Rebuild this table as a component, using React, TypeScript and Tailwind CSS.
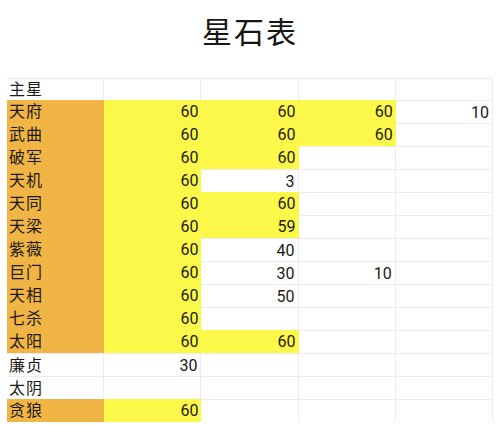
import React from "react";

type Cell = { v?: string; y?: boolean };
type Row = { name: string; o: boolean; cells: Cell[] };

const rows: Row[] = [
  { name: "天府", o: true, cells: [{ v: "60", y: true }, { v: "60", y: true }, { v: "60", y: true }, { v: "10" }] },
  { name: "武曲", o: true, cells: [{ v: "60", y: true }, { v: "60", y: true }, { v: "60", y: true }, {}] },
  { name: "破军", o: true, cells: [{ v: "60", y: true }, { v: "60", y: true }, {}, {}] },
  { name: "天机", o: true, cells: [{ v: "60", y: true }, { v: "3" }, {}, {}] },
  { name: "天同", o: true, cells: [{ v: "60", y: true }, { v: "60", y: true }, {}, {}] },
  { name: "天梁", o: true, cells: [{ v: "60", y: true }, { v: "59", y: true }, {}, {}] },
  { name: "紫薇", o: true, cells: [{ v: "60", y: true }, { v: "40" }, {}, {}] },
  { name: "巨门", o: true, cells: [{ v: "60", y: true }, { v: "30" }, { v: "10" }, {}] },
  { name: "天相", o: true, cells: [{ v: "60", y: true }, { v: "50" }, {}, {}] },
  { name: "七杀", o: true, cells: [{ v: "60", y: true }, {}, {}, {}] },
  { name: "太阳", o: true, cells: [{ v: "60", y: true }, { v: "60", y: true }, {}, {}] },
  { name: "廉贞", o: false, cells: [{ v: "30" }, {}, {}, {}] },
  { name: "太阴", o: false, cells: [{}, {}, {}, {}] },
  { name: "贪狼", o: true, cells: [{ v: "60", y: true }, {}, {}, {}] },
];

export default function App() {
  return (
    <div
      className="w-[500px] h-[425px] overflow-hidden bg-white text-[#1c1a16]"
      style={{ fontFamily: 'Roboto, "Noto Sans CJK SC", sans-serif' }}
    >
      <div className="pt-[14px] h-[78px] text-center text-[30px] leading-[38px] font-normal tracking-[2px] text-[#161616]">
        星石表
      </div>
      <div className="ml-[7px] w-[486px] grid grid-cols-5 text-[16px] leading-[22px]">
        <div className="h-[22px] pl-[2px] tracking-[1px] border-t border-r border-[#eeeaee]">主星</div>
        <div className="h-[22px] border-t border-r border-[#eeeaee]"></div>
        <div className="h-[22px] border-t border-r border-[#eeeaee]"></div>
        <div className="h-[22px] border-t border-r border-[#eeeaee]"></div>
        <div className="h-[22px] border-t border-r border-[#eeeaee]"></div>
        {rows.map((r) => (
          <React.Fragment key={r.name}>
            <div
              className={
                r.o
                  ? "h-[23px] leading-[23px] pl-[2px] tracking-[1px] bg-[#f1b545]"
                  : "h-[23px] leading-[23px] pl-[2px] tracking-[1px] bg-white border-t border-r border-[#eeeaee]"
              }
            >
              {r.name}
            </div>
            {r.cells.map((c, i) => (
              <div
                key={i}
                className={
                  c.y
                    ? "h-[23px] leading-[23px] pr-[3px] text-right bg-[#fcf84a]"
                    : "h-[23px] leading-[23px] pr-[3px] text-right bg-white border-t border-r border-[#eeeaee]"
                }
              >
                {c.v ?? ""}
              </div>
            ))}
          </React.Fragment>
        ))}
      </div>
    </div>
  );
}
